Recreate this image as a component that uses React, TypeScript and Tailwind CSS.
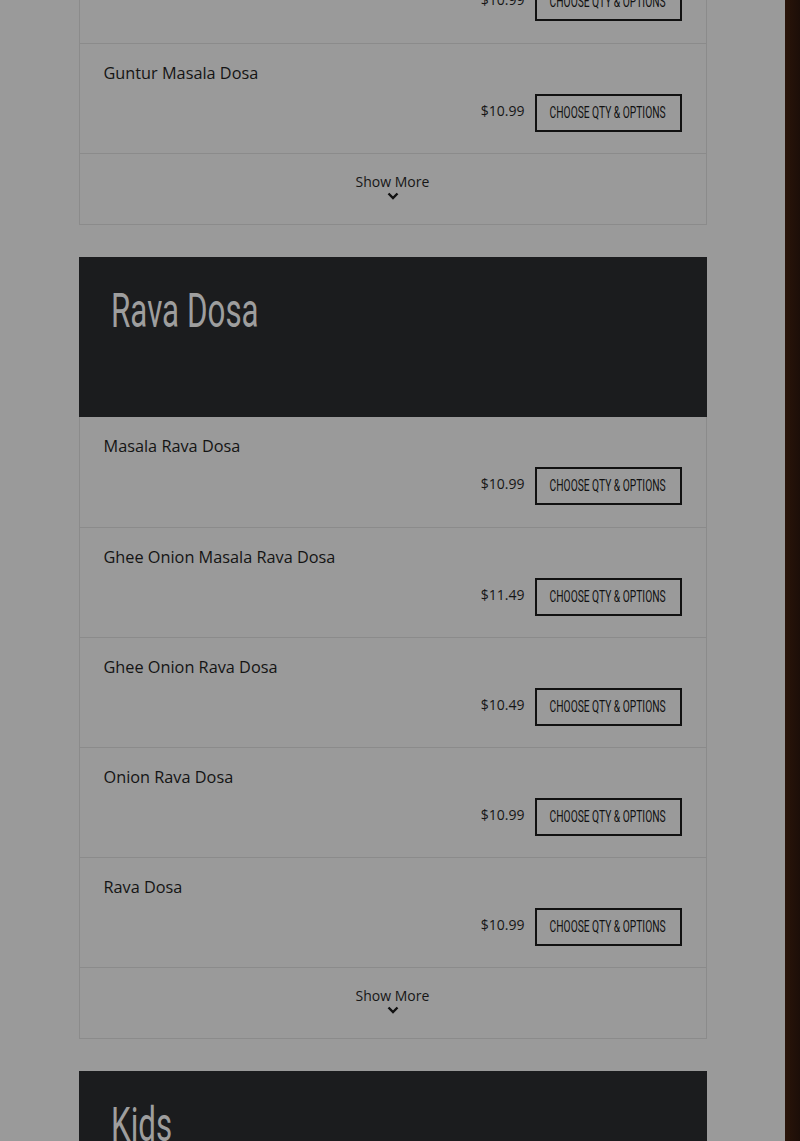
import React from 'react';

type Item = { name: string; price: string };

const ravaItems: Item[] = [
  { name: 'Masala Rava Dosa', price: '$10.99' },
  { name: 'Ghee Onion Masala Rava Dosa', price: '$11.49' },
  { name: 'Ghee Onion Rava Dosa', price: '$10.49' },
  { name: 'Onion Rava Dosa', price: '$10.99' },
  { name: 'Rava Dosa', price: '$10.99' },
];

// no Oswald offline, so squeeze Roboto to get the condensed look
const condensed = "inline-block whitespace-nowrap font-['Roboto',sans-serif] scale-x-[0.64]";

function Chevron() {
  return (
    <svg width="12" height="8" viewBox="0 0 12 8" className="mx-auto">
      <path d="M1.5 1.5 L6 6 L10.5 1.5" fill="none" stroke="#111" strokeWidth="2.4" />
    </svg>
  );
}

function MenuRow({ item }: { item: Item }) {
  return (
    <div className="h-[110px] border-t border-[#8b8b8b] px-[24px] pt-[17px] first:border-t-0">
      <div className="text-[16.3px] leading-[24px] text-[#141414]">{item.name || '\u00a0'}</div>
      <div className="mt-[9px] flex items-start justify-end gap-[10px]">
        <span className="mt-[7px] text-[14px] leading-[20px] text-[#161616]">{item.price}</span>
        <button className="flex h-[38px] w-[147px] items-center justify-center border-2 border-[#111] text-[#111]">
          <span className={`${condensed} text-[16px] font-normal leading-[20px]`}>CHOOSE QTY &amp; OPTIONS</span>
        </button>
      </div>
    </div>
  );
}

function ShowMore() {
  return (
    <div className="h-[71px] border-t border-[#8b8b8b] pt-[18px] text-center">
      <div className="text-[14px] leading-[20px] text-[#161616]">Show More</div>
      <Chevron />
    </div>
  );
}

function CategoryHeader({ title }: { title: string }) {
  return (
    <div className="h-[160px] bg-[#1b1c1e] px-[32px] pt-[26px]">
      <h2 className={`${condensed} origin-left text-[49px] leading-[56px] text-[#9e9e9e]`}>{title}</h2>
    </div>
  );
}

export default function App() {
  return (
    <div className="flex h-[1141px] w-[800px] overflow-hidden bg-[#9a9a9a] font-['Open_Sans',sans-serif]">
      <main className="flex w-[785px] flex-col items-center">
        {/* cut-off card */}
        <div className="mt-[-67px] w-[628px] border-x border-b border-[#8b8b8b]">
          <MenuRow item={{ name: '', price: '$10.99' }} />
          <MenuRow item={{ name: 'Guntur Masala Dosa', price: '$10.99' }} />
          <ShowMore />
        </div>

        <div className="mt-[32px] w-[628px]">
          <CategoryHeader title="Rava Dosa" />
          <div className="border-x border-b border-[#8b8b8b]">
            {ravaItems.map((item) => (
              <MenuRow key={item.name} item={item} />
            ))}
            <ShowMore />
          </div>
        </div>

        <div className="mt-[32px] w-[628px]">
          <CategoryHeader title="Kids" />
        </div>
      </main>
      <aside className="w-[15px] bg-gradient-to-r from-[#2a1409] to-[#1c0e08]" />
    </div>
  );
}
